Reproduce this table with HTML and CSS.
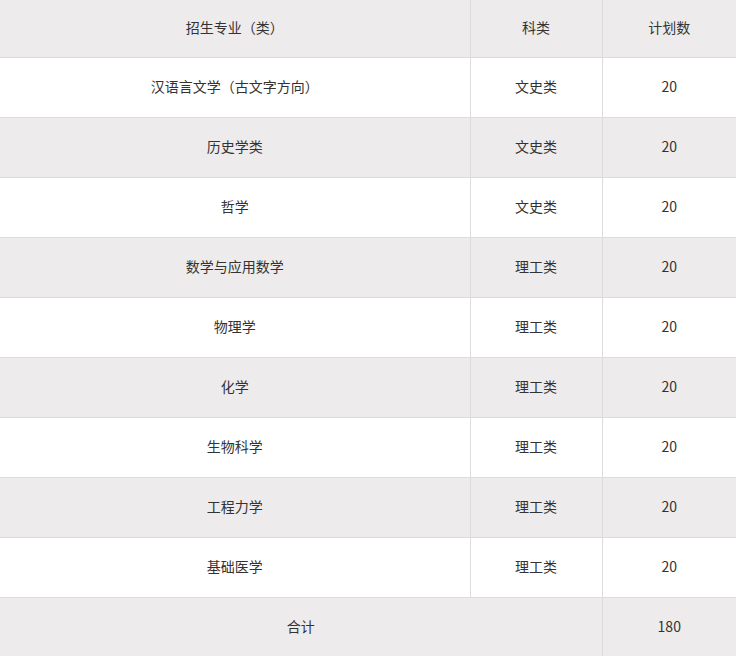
FILE: index.html
```html
<!DOCTYPE html>
<html lang="zh-CN">
<head>
<meta charset="utf-8">
<title>招生计划</title>
<link rel="stylesheet" href="styles.css">
</head>
<body>
<table class="plan">
  <colgroup>
    <col class="c1"><col class="c2"><col class="c3">
  </colgroup>
  <thead>
    <tr class="head"><th>招生专业（类）</th><th>科类</th><th>计划数</th></tr>
  </thead>
  <tbody>
    <tr class="odd"><td>汉语言文学（古文字方向）</td><td>文史类</td><td>20</td></tr>
    <tr class="even"><td>历史学类</td><td>文史类</td><td>20</td></tr>
    <tr class="odd"><td>哲学</td><td>文史类</td><td>20</td></tr>
    <tr class="even"><td>数学与应用数学</td><td>理工类</td><td>20</td></tr>
    <tr class="odd"><td>物理学</td><td>理工类</td><td>20</td></tr>
    <tr class="even"><td>化学</td><td>理工类</td><td>20</td></tr>
    <tr class="odd"><td>生物科学</td><td>理工类</td><td>20</td></tr>
    <tr class="even"><td>工程力学</td><td>理工类</td><td>20</td></tr>
    <tr class="odd"><td>基础医学</td><td>理工类</td><td>20</td></tr>
    <tr class="even total"><td colspan="2">合计</td><td>180</td></tr>
  </tbody>
</table>
</body>
</html>
```
FILE: styles.css
```css
html, body {
  margin: 0;
  padding: 0;
  background: #ffffff;
}
.plan {
  width: 736px;
  border-collapse: collapse;
  table-layout: fixed;
  font-family: "Noto Sans CJK SC", "Liberation Sans", sans-serif;
  font-size: 14px;
  line-height: 20px;
  color: #333333;
}
.c1 { width: 470px; }
.c2 { width: 132px; }
.c3 { width: 134px; }
.plan th,
.plan td {
  text-align: center;
  font-weight: normal;
  padding: 0 0 4px;
  border: 1px solid #dcdcdc;
  border-top: none;
  height: 55px;
}
.plan th:first-child,
.plan td:first-child { border-left: none; }
.plan th:last-child,
.plan td:last-child { border-right: none; }
.plan .head th {
  height: 53px;
  background: #edebeb;
}
.odd td { background: #ffffff; }
.even td { background: #edebeb; }
.total td { border-bottom: none; }
```
